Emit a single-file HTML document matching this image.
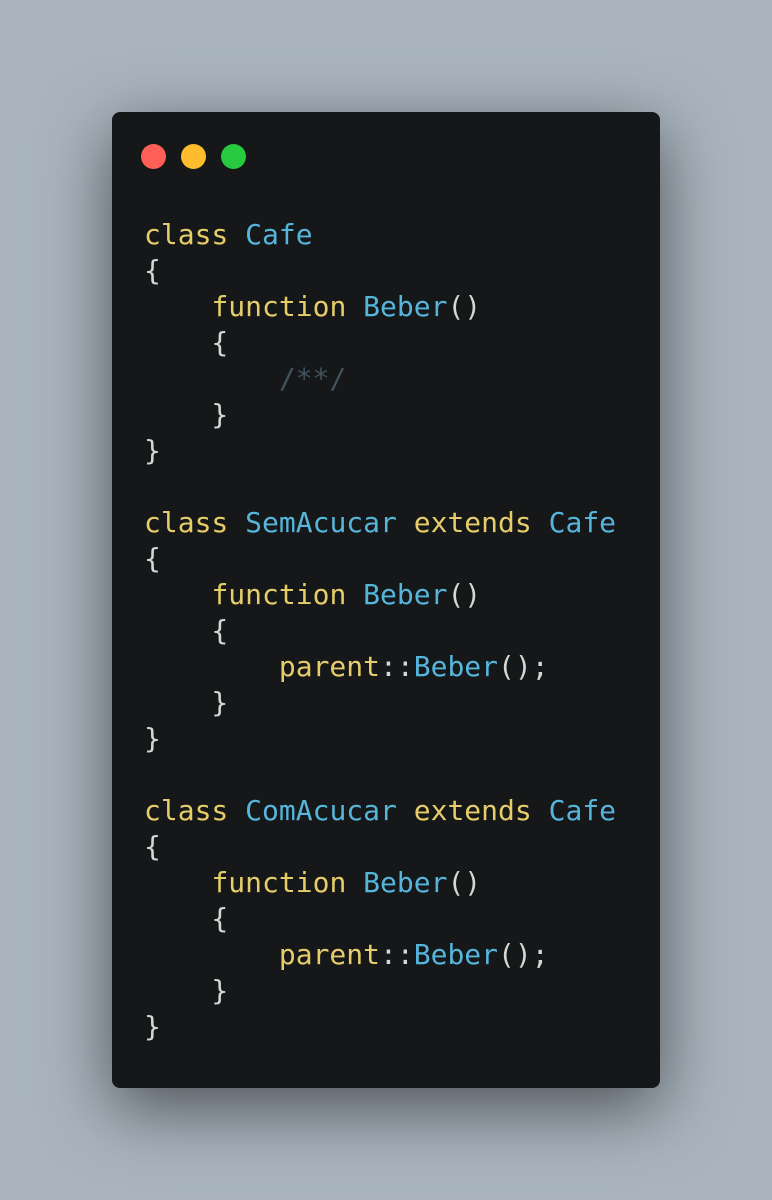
<!DOCTYPE html>
<html><head><style>
html,body{margin:0;padding:0;}
body{width:772px;height:1200px;background:#a9b4be;position:relative;overflow:hidden;}
.card{position:absolute;left:112px;top:112px;width:548px;height:976px;background:#151718;border-radius:8px;box-shadow:0 20px 68px rgba(0,0,0,0.55);}
.dot{position:absolute;top:144px;width:25px;height:25px;border-radius:50%;}
pre{position:absolute;left:144px;top:217px;margin:0;font-family:"DejaVu Sans Mono","Liberation Mono",monospace;font-size:28px;line-height:36px;color:#d4d7d6;}
.k{color:#e6cd69}.b{color:#55b5db}.c{color:#41535b}
</style></head><body>
<div class="card"></div>
<div class="dot" style="left:141px;background:#ff5f56"></div>
<div class="dot" style="left:181px;background:#ffbd2e"></div>
<div class="dot" style="left:221px;background:#27c93f"></div>
<pre><span class="k">class</span> <span class="b">Cafe</span>
{
    <span class="k">function</span> <span class="b">Beber</span>()
    {
        <span class="c">/**/</span>
    }
}

<span class="k">class</span> <span class="b">SemAcucar</span> <span class="k">extends</span> <span class="b">Cafe</span>
{
    <span class="k">function</span> <span class="b">Beber</span>()
    {
        <span class="k">parent</span>::<span class="b">Beber</span>();
    }
}

<span class="k">class</span> <span class="b">ComAcucar</span> <span class="k">extends</span> <span class="b">Cafe</span>
{
    <span class="k">function</span> <span class="b">Beber</span>()
    {
        <span class="k">parent</span>::<span class="b">Beber</span>();
    }
}</pre>
</body></html>
